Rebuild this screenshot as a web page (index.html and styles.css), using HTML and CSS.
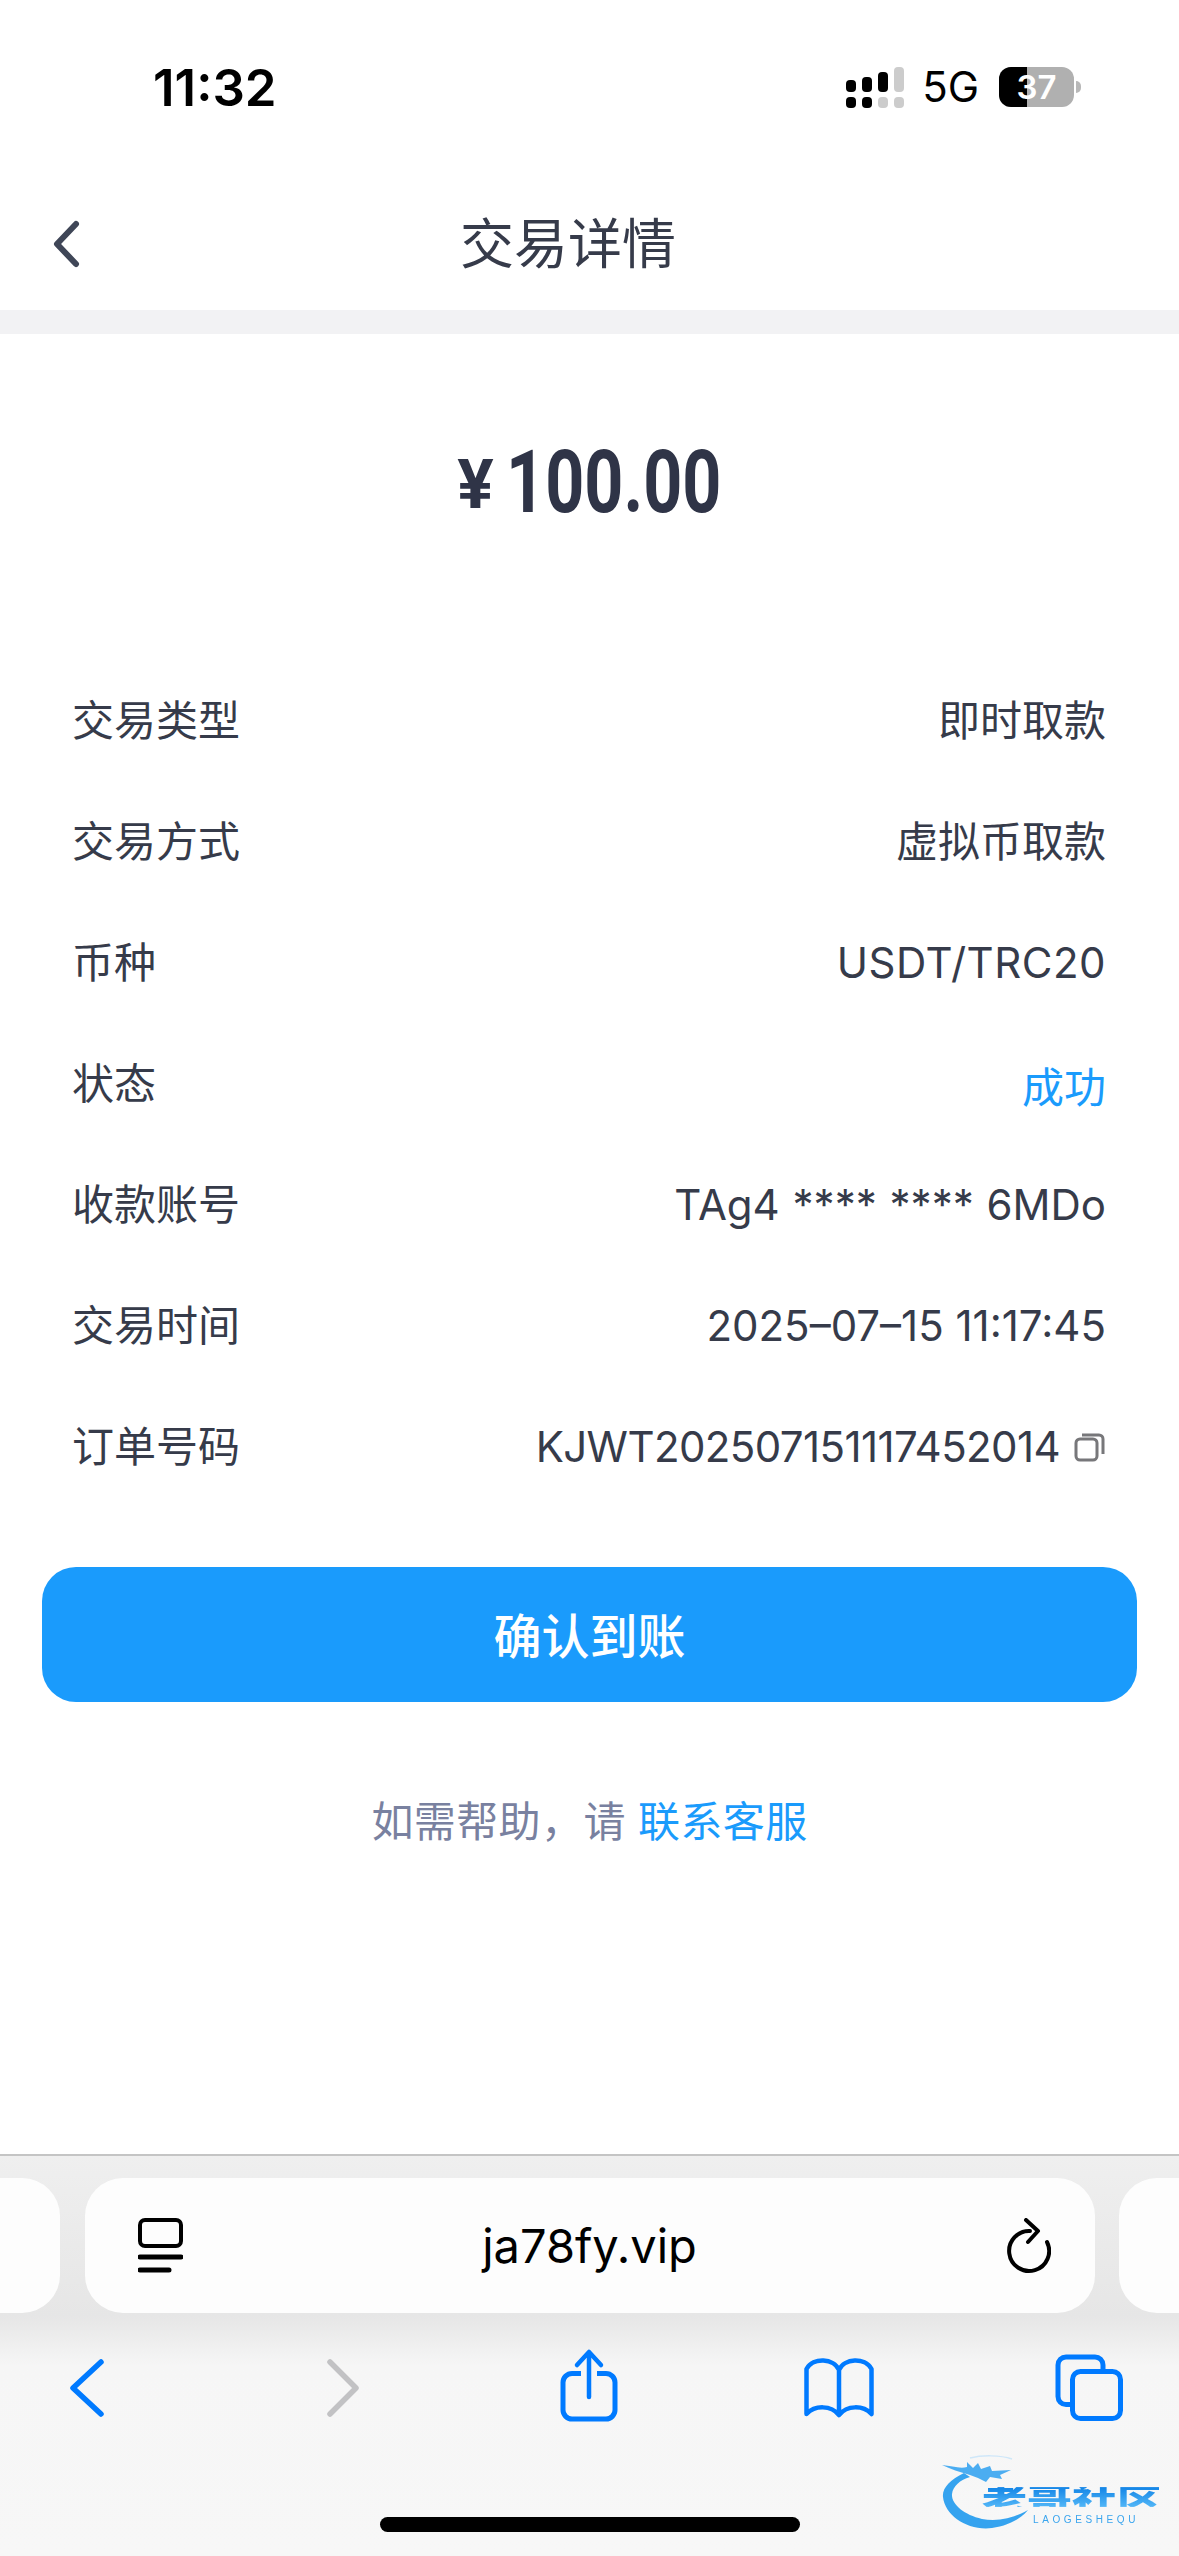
FILE: index.html
```html
<!DOCTYPE html>
<html lang="zh-CN">
<head>
  <meta charset="UTF-8">
  <meta name="viewport" content="width=device-width, initial-scale=1.0">
  <title>交易详情</title>
  <link rel="stylesheet" href="styles.css">
</head>
<body>
  <div class="phone">
    <!-- 状态栏 -->
    <div class="status-bar">
      <span class="status-time">11:32</span>
      <div class="status-right">
        <svg class="signal" width="58" height="42" viewBox="0 0 58 42">
          <rect x="0" y="13" width="10" height="12" rx="4" fill="#000"/>
          <rect x="16" y="10" width="10" height="15" rx="4" fill="#000"/>
          <rect x="32" y="5" width="10" height="20" rx="4" fill="#000"/>
          <rect x="48" y="0" width="10" height="25" rx="4" fill="#ccc"/>
          <rect x="0" y="30" width="10" height="11" rx="4" fill="#000"/>
          <rect x="16" y="30" width="10" height="11" rx="4" fill="#000"/>
          <rect x="32" y="30" width="10" height="11" rx="4" fill="#ccc"/>
          <rect x="48" y="30" width="10" height="11" rx="4" fill="#ccc"/>
        </svg>
        <span class="status-net">5G</span>
        <div class="battery">
          <div class="battery-level"></div>
          <span class="battery-text">37</span>
        </div>
        <div class="battery-nub"></div>
      </div>
    </div>

    <!-- 导航 -->
    <div class="nav">
      <svg class="nav-back" width="30" height="48" viewBox="0 0 30 48">
        <path d="M25 4 L6 24 L25 44" fill="none" stroke="#3f4657" stroke-width="6" stroke-linecap="round" stroke-linejoin="round"/>
      </svg>
      <h1 class="nav-title">交易详情</h1>
    </div>
    <div class="band"></div>

    <!-- 金额 -->
    <div class="amount">
      <span class="amount-unit">¥</span>
      <span class="amount-value">100.00</span>
    </div>

    <!-- 明细 -->
    <div class="detail-list">
      <div class="detail-row"><span>交易类型</span><span>即时取款</span></div>
      <div class="detail-row"><span>交易方式</span><span>虚拟币取款</span></div>
      <div class="detail-row"><span>币种</span><span class="detail-coin">USDT/TRC20</span></div>
      <div class="detail-row"><span>状态</span><span class="detail-success">成功</span></div>
      <div class="detail-row"><span>收款账号</span><span class="detail-account">TAg4 **** **** 6MDo</span></div>
      <div class="detail-row"><span>交易时间</span><span>2025–07–15 11:17:45</span></div>
      <div class="detail-row">
        <span>订单号码</span>
        <span class="detail-order">KJWT202507151117452014
          <svg class="copy-icon" width="32" height="30" viewBox="0 0 32 30">
            <rect x="2" y="7" width="21" height="21" rx="4" fill="none" stroke="#77777a" stroke-width="3"/>
            <path d="M8 3 H25 a4 4 0 0 1 4 4 V22" fill="none" stroke="#77777a" stroke-width="3"/>
          </svg>
        </span>
      </div>
    </div>

    <button class="confirm-btn">确认到账</button>
    <p class="help">如需帮助，请 <a class="help-link">联系客服</a></p>

    <!-- Safari 工具栏 -->
    <div class="browser">
      <div class="tab-row">
        <div class="tab-side tab-left"></div>
        <div class="url-pill">
          <svg width="45" height="56" viewBox="0 0 45 56">
            <rect x="2" y="2" width="41" height="26" rx="5" fill="none" stroke="#000" stroke-width="4"/>
            <path d="M2 39 H43 M2 52 H31" fill="none" stroke="#000" stroke-width="5" stroke-linecap="round"/>
          </svg>
          <span class="url-text">ja78fy.vip</span>
          <svg width="54" height="56" viewBox="0 0 54 56">
            <path d="M50 24 A20 20 0 1 1 33 13" fill="none" stroke="#000" stroke-width="4" stroke-linecap="round"/>
            <path d="M29 2 L41 13 L31 24" fill="none" stroke="#000" stroke-width="4" stroke-linecap="round" stroke-linejoin="round"/>
          </svg>
        </div>
        <div class="tab-side tab-right"></div>
      </div>
      <div class="toolbar">
        <svg class="tool tool-back" width="80" height="80" viewBox="0 0 80 80">
          <path d="M55 17 L27 43 L55 69" fill="none" stroke="#007aff" stroke-width="5.5" stroke-linecap="round" stroke-linejoin="round"/>
        </svg>
        <svg class="tool tool-forward" width="80" height="80" viewBox="0 0 80 80">
          <path d="M28 17 L54 43 L28 69" fill="none" stroke="#c2c2c4" stroke-width="5.5" stroke-linecap="round" stroke-linejoin="round"/>
        </svg>
        <svg class="tool tool-share" width="80" height="80" viewBox="0 0 80 80">
          <path d="M32 28.5 H23 a9 9 0 0 0 -9 9 V65 a9 9 0 0 0 9 9 H57 a9 9 0 0 0 9 -9 V37.5 a9 9 0 0 0 -9 -9 H48" fill="none" stroke="#007aff" stroke-width="5"/>
          <path d="M40 52 V8 M28 20 L40 7 L52 20" fill="none" stroke="#007aff" stroke-width="4.5" stroke-linecap="round" stroke-linejoin="round"/>
        </svg>
        <svg class="tool tool-book" width="80" height="80" viewBox="0 0 80 80">
          <path d="M40 25 C35 13 14 12 7.5 24 V69 C16 60 32 60 40 70 C48 60 64 60 72.5 69 V24 C66 12 45 13 40 25 V70" fill="none" stroke="#007aff" stroke-width="4.5" stroke-linecap="round" stroke-linejoin="round"/>
        </svg>
        <svg class="tool tool-tabs" width="80" height="80" viewBox="0 0 80 80">
          <path d="M22 59.5 H18 a8 8 0 0 1 -8 -8 V20 a8 8 0 0 1 8 -8 H47 a8 8 0 0 1 8 8 V26" fill="none" stroke="#007aff" stroke-width="5"/>
          <rect x="24.5" y="26.5" width="48" height="47" rx="8" fill="none" stroke="#007aff" stroke-width="5"/>
        </svg>
      </div>
      <div class="home-bar"></div>
    </div>

    <!-- 水印 -->
    <div class="watermark">
      <svg class="watermark-dragon" width="100" height="85" viewBox="0 0 100 85">
        <path d="M24 23 C10 30 2 38 3 47 C5 66 28 81 52 78 C66 76 80 70 88 60 C74 68 58 72 42 69 C24 65 11 54 12 44 C13 36 20 30 30 27 Z" fill="#35a3ef"/>
        <path d="M2 15 C12 16 20 19 27 17 L27 12 L33 18 L38 13 L41 19 L50 16 L52 21 L71 20 L60 25 L62 29 L50 27 L46 32 L38 28 L30 25 C20 22 10 19 2 15 Z" fill="#4badf1"/>
        <path d="M30 8 C42 5 60 5 72 9" fill="none" stroke="#cfe7f9" stroke-width="1.5"/>
      </svg>
      <span class="watermark-title">老哥社区</span>
      <span class="watermark-sub">LAOGESHEQU</span>
    </div>
  </div>
</body>
</html>
```

FILE: styles.css
```css
* {
  box-sizing: border-box;
}
body {
  margin: 0;
  background-color: #fff;
  font-family: Inter, "Noto Sans CJK SC", sans-serif;
}
.phone {
  position: relative;
  display: flex;
  flex-direction: column;
  width: 1179px;
  height: 2556px;
  overflow: hidden;
  background-color: #fff;
}

/* status bar */
.status-bar {
  display: flex;
  justify-content: space-between;
  height: 180px;
  padding: 58px 98px 0 153px;
  color: #000;
}
.status-time {
  font-size: 51px;
  font-weight: 600;
  line-height: 60px;
}
.status-right {
  display: flex;
  align-items: flex-start;
  padding-top: 9px;
}
.signal {
  margin-right: 18px;
}
.status-net {
  margin-right: 20px;
  margin-top: -1px;
  font-size: 42px;
  line-height: 42px;
}
.battery {
  position: relative;
  width: 75px;
  height: 40px;
  border-radius: 12px;
  overflow: hidden;
  background-color: #b0b0b0;
}
.battery-level {
  width: 28px;
  height: 40px;
  background-color: #000;
}
.battery-text {
  position: absolute;
  top: 0;
  left: 0;
  width: 75px;
  color: #fff;
  font-size: 33px;
  font-weight: 600;
  line-height: 40px;
  text-align: center;
}
.battery-nub {
  width: 5px;
  height: 12px;
  margin: 14px 0 0 2px;
  border-radius: 0 6px 6px 0;
  background-color: #b8b8b8;
}

/* nav */
.nav {
  position: relative;
  display: flex;
  align-items: center;
  justify-content: center;
  height: 130px;
  padding-right: 43px;
}
.nav-back {
  position: absolute;
  left: 51px;
  top: 40px;
}
.nav-title {
  margin: 0;
  color: #363b4a;
  font-size: 54px;
  font-weight: 400;
  line-height: 70px;
}
.band {
  height: 24px;
  background-color: #f2f2f4;
}

/* amount */
.amount {
  display: flex;
  align-items: center;
  justify-content: center;
  gap: 12px;
  height: 326px;
  padding: 0 3px 31px 0;
  color: #2f3447;
  font-family: Roboto, sans-serif;
  font-weight: 700;
}
.amount-unit {
  margin-top: 6px;
  font-size: 68px;
  line-height: 100px;
}
.amount-value {
  display: inline-block;
  width: 213px;
  font-size: 88px;
  line-height: 100px;
  white-space: nowrap;
  transform: scaleX(0.775);
  transform-origin: left center;
}

/* detail rows */
.detail-list {
  padding: 0 73px 0 72px;
}
.detail-row {
  display: flex;
  justify-content: space-between;
  align-items: center;
  height: 121px;
  color: #363b4a;
  font-size: 42px;
  line-height: 60px;
}
.detail-coin {
  letter-spacing: 0.5px;
}
.detail-account {
  word-spacing: 1px;
}
.detail-success {
  margin-top: 8px;
  color: #1a9bfc;
}
.detail-order {
  display: flex;
  align-items: center;
  gap: 14px;
  letter-spacing: -0.6px;
}

.confirm-btn {
  display: block;
  width: 1095px;
  height: 135px;
  margin: 60px 0 0 42px;
  padding: 0 0 4px;
  border: 0;
  border-radius: 34px;
  background-color: #1a9bfc;
  color: #fff;
  font-family: inherit;
  font-size: 48px;
  font-weight: 500;
}
.help {
  margin: 60px 0 0;
  color: #7981a0;
  font-size: 42px;
  letter-spacing: 0.4px;
  line-height: 120px;
  text-align: center;
}
.help-link {
  color: #1a9bfc;
}

/* browser chrome */
.browser {
  margin-top: auto;
  height: 402px;
  border-top: 2px solid #c4c4c4;
  background: linear-gradient(#efefef 0, #e6e6e6 160px, #f6f6f6 210px, #f7f7f7 100%);
}
.tab-row {
  display: flex;
  justify-content: space-between;
  height: 135px;
  margin-top: 22px;
}
.tab-side {
  width: 60px;
  background-color: #fdfdfd;
}
.tab-left {
  border-radius: 0 38px 38px 0;
}
.tab-right {
  border-radius: 38px 0 0 38px;
}
.url-pill {
  display: flex;
  align-items: center;
  width: 1010px;
  padding: 0 44px 0 53px;
  border-radius: 38px;
  background-color: #fdfdfd;
}
.url-text {
  flex: 1;
  color: #000;
  font-size: 47px;
  text-align: center;
}
.toolbar {
  display: flex;
  align-items: flex-start;
  margin-top: 32px;
  padding-left: 46px;
}
.tool-forward { margin-left: 176px; }
.tool-share { margin-left: 167px; }
.tool-book { margin-left: 170px; }
.tool-tabs { margin-left: 169px; }
.home-bar {
  width: 420px;
  height: 15px;
  margin: 92px 0 0 380px;
  border-radius: 8px;
  background-color: #000;
}

/* watermark over the toolbar */
.watermark {
  position: absolute;
  left: 940px;
  top: 2450px;
  width: 225px;
  height: 85px;
  filter: blur(0.7px);
}
.watermark-dragon {
  position: absolute;
  left: 0;
  top: 0;
}
.watermark-title {
  position: absolute;
  left: 42px;
  top: 32px;
  width: 184px;
  height: 30px;
  background: linear-gradient(#1284e6, #52b6f7);
  -webkit-background-clip: text;
  background-clip: text;
  color: transparent;
  font-family: "Noto Sans CJK SC", sans-serif;
  font-size: 45px;
  font-weight: 900;
  line-height: 30px;
  white-space: nowrap;
  transform: scaleY(0.66);
}
.watermark-sub {
  position: absolute;
  left: 93px;
  top: 64px;
  color: #3aa5ee;
  font-family: "Liberation Sans", sans-serif;
  font-size: 10px;
  letter-spacing: 3.6px;
  white-space: nowrap;
}
```
